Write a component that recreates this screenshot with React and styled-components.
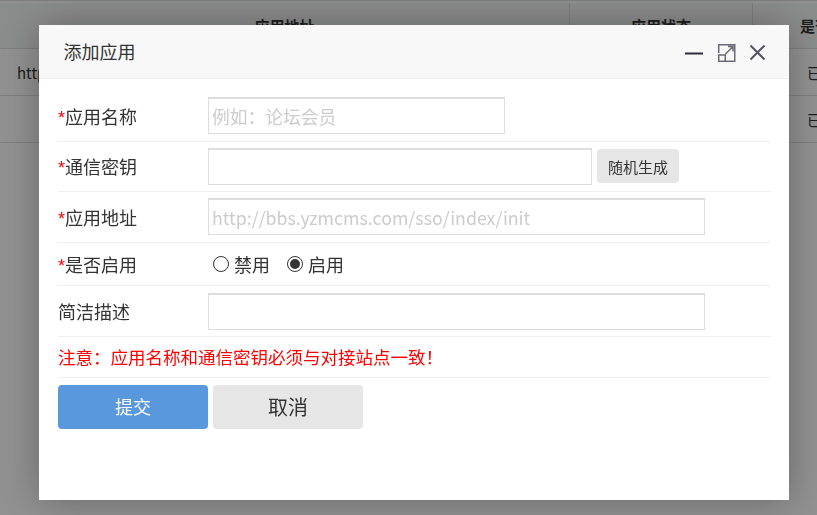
import React from "react";
import styled, { createGlobalStyle } from "styled-components";

const fontStack = `"Noto Sans CJK SC", "Noto Sans", sans-serif`;

const GlobalStyle = createGlobalStyle`
  html, body {
    margin: 0;
    padding: 0;
    height: 100%;
    overflow: hidden;
    background: #fff;
    font-family: ${fontStack};
    color: #333;
  }
`

const Table = styled.div`
  padding-top: 2px;
  border-top: 1px solid #ddd;
  font-size: 15px;
  color: #333;
`

const TableRow = styled.div`
  display: grid;
  grid-template-columns: 570px 183px 64px;
  height: ${props => props.$head ? 45 : 46}px;
  background: ${props => props.$head ? "#f5f6f6" : "#fff"};
  border-bottom: 1px solid #ddd;
  align-items: center;
`

const TableCell = styled.div`
  height: 100%;
  display: flex;
  align-items: center;
  justify-content: ${props => props.$center ? "center" : "flex-start"};
  padding-left: ${props => props.$pad || 0}px;
  border-right: ${props => props.$line ? "1px solid #ddd" : "0"};
  box-sizing: border-box;
  font-weight: ${props => props.$head ? "bold" : "normal"};
  white-space: nowrap;
  overflow: hidden;
`

const Shade = styled.div`
  position: fixed;
  inset: 0;
  background: rgba(0, 0, 0, .43);
`

const Modal = styled.div`
  position: fixed;
  left: 39px;
  top: 25px;
  width: 750px;
  height: 475px;
  background: #fff;
  box-shadow: 0 0 38px rgba(0, 0, 0, .3);
  display: flex;
  flex-direction: column;
`

const ModalHeader = styled.div`
  height: 54px;
  box-sizing: border-box;
  padding: 0 22px 0 24.5px;
  background: #f8f8f8;
  border-bottom: 1px solid #eee;
  display: flex;
  align-items: center;
  justify-content: space-between;
`

const ModalTitle = styled.div`
  font-size: 18px;
  padding-bottom: 2px;
  color: #333;
`

const HeaderIcons = styled.div`
  display: flex;
  align-items: center;
  gap: 11px;
`

const IconSvg = styled.svg`
  display: block;
  width: 20px;
  height: 20px;
  fill: none;
`

const ModalBody = styled.div`
  padding: 0 19px;
`

const Row = styled.div`
  height: ${props => props.$h}px;
  box-sizing: border-box;
  padding-top: ${props => props.$top || 0}px;
  padding-bottom: ${props => props.$bottom || 0}px;
  border-bottom: 1px solid #eee;
  display: flex;
  align-items: center;
  font-size: 18px;
`

const Label = styled.div`
  width: 150px;
  flex: none;
  color: #333;
`

const Star = styled.span`
  color: #f00;
  font-family: "Liberation Sans", sans-serif;
`

const TextInput = styled.input`
  width: ${props => props.$w}px;
  height: 37px;
  box-sizing: border-box;
  border: 1px solid #ddd;
  border-top: 2px solid #ddd;
  padding: 0 3px;
  font-family: ${fontStack};
  font-size: 17.75px;
  outline: none;
  &::placeholder {
    color: #ccc;
    opacity: 1;
  }
`

const SmallButton = styled.button`
  margin-left: 5px;
  width: 82px;
  height: 34px;
  border: 0;
  border-radius: 4px;
  background: #e6e6e6;
  color: #333;
  font-family: ${fontStack};
  font-size: 15px;
  padding: 0;
`

const RadioLabel = styled.label`
  display: flex;
  align-items: center;
  margin-left: ${props => props.$first ? 5 : 17}px;
  gap: 5px;
  color: #333;
`

const RadioDot = styled.span`
  width: 16px;
  height: 16px;
  box-sizing: border-box;
  border-radius: 50%;
  border: 1px solid #333;
  display: flex;
  align-items: center;
  justify-content: center;
  &::after {
    content: "";
    width: 10px;
    height: 10px;
    border-radius: 50%;
    background: ${props => props.$on ? "#333" : "transparent"};
  }
`

const Notice = styled.div`
  color: #f00;
  font-size: 17.5px;
`

const Buttons = styled.div`
  display: flex;
  gap: 5px;
  padding-top: 7px;
`

const ActionButton = styled.button`
  width: 150px;
  height: 44px;
  border: 0;
  border-radius: 4px;
  background: ${props => props.$primary ? "#5a98de" : "#e6e6e6"};
  color: ${props => props.$primary ? "#fff" : "#333"};
  font-family: ${fontStack};
  font-size: ${props => props.$primary ? 18 : 20}px;
  padding: 0 0 2px;
`

const App = () => {
  return (
    <>
      <GlobalStyle />
      <Table>
        <TableRow $head>
          <TableCell $head $center $line>应用地址</TableCell>
          <TableCell $head $center $line>应用状态</TableCell>
          <TableCell $head $pad={47}>是否</TableCell>
        </TableRow>
        <TableRow>
          <TableCell $pad={17} $line>http://bbs.yzmcms.com</TableCell>
          <TableCell $line />
          <TableCell $pad={54}>已</TableCell>
        </TableRow>
        <TableRow>
          <TableCell $line />
          <TableCell $line />
          <TableCell $pad={54}>已</TableCell>
        </TableRow>
      </Table>
      <Shade />
      <Modal>
        <ModalHeader>
          <ModalTitle>添加应用</ModalTitle>
          <HeaderIcons>
            <IconSvg viewBox="0 0 20 20">
              <path d="M0 11.5h18" stroke="#2e2d3c" strokeWidth="2" />
            </IconSvg>
            <IconSvg viewBox="0 0 20 20">
              <path d="M2.75 11V2.75h16v16.5H10M2.75 13h6.5v6.25h-6.5zM9.5 12 17 4.5M12 4.5h5v5" stroke="#6a6a76" strokeWidth="1.5" />
            </IconSvg>
            <IconSvg viewBox="0 0 20 20">
              <path d="M3.5 3.5l14 14M17.5 3.5l-14 14" stroke="#555562" strokeWidth="2" />
            </IconSvg>
          </HeaderIcons>
        </ModalHeader>
        <ModalBody>
          <Row $h={63} $top={11}>
            <Label><Star>*</Star>应用名称</Label>
            <TextInput $w={297} placeholder={"例如\uFF1A论坛会员"} />
          </Row>
          <Row $h={50} $bottom={1}>
            <Label><Star>*</Star>通信密钥</Label>
            <TextInput $w={384} />
            <SmallButton>随机生成</SmallButton>
          </Row>
          <Row $h={51} $bottom={1}>
            <Label><Star>*</Star>应用地址</Label>
            <TextInput $w={497} placeholder="http://bbs.yzmcms.com/sso/index/init" />
          </Row>
          <Row $h={43}>
            <Label><Star>*</Star>是否启用</Label>
            <RadioLabel $first><RadioDot />禁用</RadioLabel>
            <RadioLabel><RadioDot $on />启用</RadioLabel>
          </Row>
          <Row $h={51}>
            <Label>简洁描述</Label>
            <TextInput $w={497} />
          </Row>
          <Row $h={41} $bottom={1}>
            <Notice>{"注意\uFF1A应用名称和通信密钥必须与对接站点一致\uFF01"}</Notice>
          </Row>
          <Buttons>
            <ActionButton $primary>提交</ActionButton>
            <ActionButton>取消</ActionButton>
          </Buttons>
        </ModalBody>
      </Modal>
    </>
  )
}

export default App;
